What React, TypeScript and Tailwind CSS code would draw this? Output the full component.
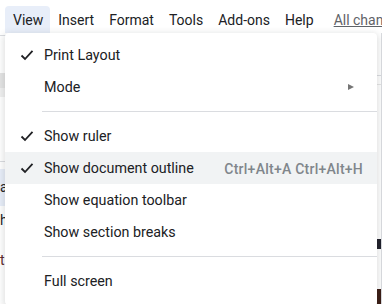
import React from "react";

const Check = () => (
  <svg width="14" height="12" viewBox="0 0 14 12" className="block">
    <path d="M1.5 6.5 L5 10 L12.5 1.8" fill="none" stroke="#202124" strokeWidth="1.8" />
  </svg>
);

type Item = { label: string; checked?: boolean; sub?: boolean; shortcut?: string; hover?: boolean };

const Row = ({ item }: { item: Item }) => (
  <div className={`flex h-[32px] items-center pr-[14px] ${item.hover ? "bg-[#f1f3f4]" : ""}`}>
    <div className="flex w-[39px] justify-start pl-[15px]">{item.checked ? <Check /> : null}</div>
    <div className="flex-1 whitespace-nowrap pt-[2px] text-[14.3px] text-[#202124]">{item.label}</div>
    {item.shortcut ? <div className="whitespace-nowrap pt-[2px] text-[14px] font-medium tracking-[0.25px] text-[#80868b]">{item.shortcut}</div> : null}
    {item.sub ? (
      <svg width="8" height="8" viewBox="0 0 8 8" className="mr-[8px]">
        <path d="M1 1 L7 4 L1 7 Z" fill="#757575" />
      </svg>
    ) : null}
  </div>
);

const Sep = () => (
  <div className="py-[8px] pl-[37px]">
    <div className="h-px bg-[#dadce0]" />
  </div>
);

export default function App() {
  const menus = ["View", "Insert", "Format", "Tools", "Add-ons", "Help"];
  return (
    <div className="relative h-[304px] w-[382px] overflow-hidden bg-white" style={{ fontFamily: "Roboto, 'Liberation Sans', sans-serif" }}>
      {/* menu bar */}
      <div className="flex h-[33px] items-end pl-[5px]">
        {menus.map((m, i) => (
          <div
            key={m}
            className={`flex h-[27px] shrink-0 items-center whitespace-nowrap pl-[8px] pr-[7px] pt-[2px] text-[14px] text-[#202124] ${i === 0 ? "rounded-t-[4px] bg-[#e8eef9]" : ""}`}
          >
            {m}
          </div>
        ))}
        <div className="flex h-[27px] shrink-0 items-center whitespace-nowrap pl-[13px] pt-[2px] text-[14px] text-[#5f6368] underline">All changes saved</div>
      </div>

      {/* background document (behind menu) */}
      <div className="flex h-[271px]">
        <div className="flex w-[6px] flex-col">
          <div className="mt-[2px] h-px bg-[#dadce0]" />
          <div className="mt-[37px] h-[15px] bg-[#e4e4e4]" />
          <div className="h-[9px] bg-[#f0f0f0]" />
          <div className="mt-[64px] h-px bg-[#dadce0]" />
          <div className="mt-[7px] h-[37px] bg-[#e8eef9] text-[14px] leading-[37px] text-[#202124]">a</div>
          <div className="mt-[4px] text-[14px] leading-[20px] text-[#202124]">h</div>
          <div className="mt-[20px] text-[14px] leading-[20px] text-[#5c2a2a]">t</div>
        </div>
        <div className="flex-1" />
        <div className="flex w-[5px] flex-col border-r border-[#dadce0]">
          <div className="mt-[42px] h-px bg-[#dadce0]" />
          <div className="mt-[8px] h-px bg-[#e5e5e5]" />
          <div className="mt-[154px] h-[10px] bg-[#1f1f2a]" />
          <div className="mt-[40px] h-[16px] bg-[#3a1c14]" />
        </div>
      </div>

      {/* dropdown menu */}
      <div className="absolute left-[5px] top-[33px] w-[372px] rounded-[4px] bg-white pt-[6px] pb-[8px] shadow-[0_2px_6px_2px_rgba(60,64,67,0.15)]">
        <Row item={{ label: "Print Layout", checked: true }} />
        <Row item={{ label: "Mode", sub: true }} />
        <Sep />
        <Row item={{ label: "Show ruler", checked: true }} />
        <Row item={{ label: "Show document outline", checked: true, shortcut: "Ctrl+Alt+A Ctrl+Alt+H", hover: true }} />
        <Row item={{ label: "Show equation toolbar" }} />
        <Row item={{ label: "Show section breaks" }} />
        <Sep />
        <Row item={{ label: "Full screen" }} />
      </div>
    </div>
  );
}
